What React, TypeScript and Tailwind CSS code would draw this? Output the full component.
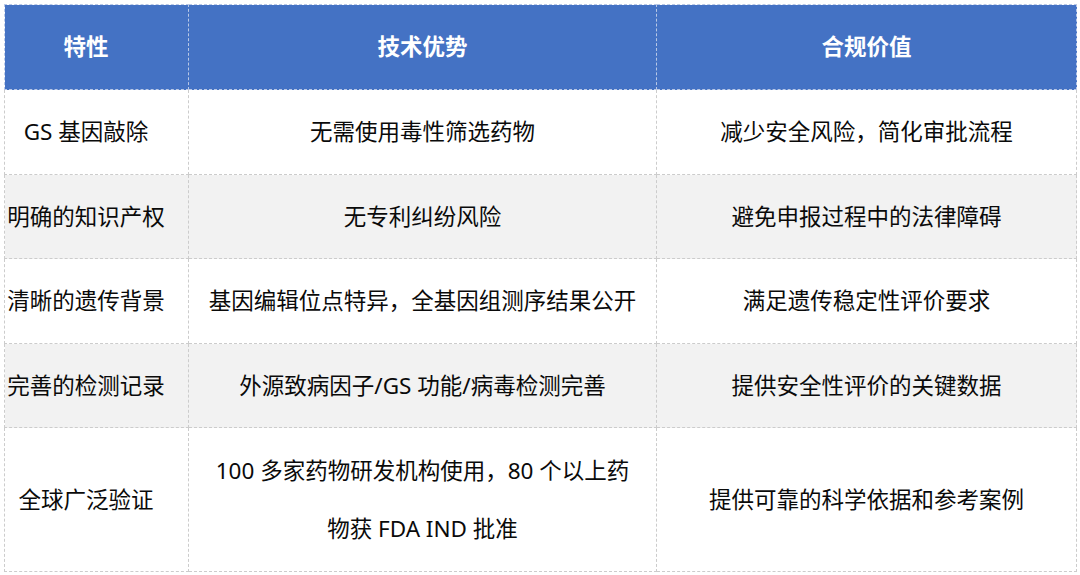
import React from "react";

const rows: { a: string; b: React.ReactNode; c: string; h: string; stripe: boolean }[] = [
  { a: "GS 基因敲除", b: "无需使用毒性筛选药物", c: "减少安全风险，简化审批流程", h: "h-[85px]", stripe: false },
  { a: "明确的知识产权", b: "无专利纠纷风险", c: "避免申报过程中的法律障碍", h: "h-[84px]", stripe: true },
  { a: "清晰的遗传背景", b: "基因编辑位点特异，全基因组测序结果公开", c: "满足遗传稳定性评价要求", h: "h-[85px]", stripe: false },
  { a: "完善的检测记录", b: "外源致病因子/GS 功能/病毒检测完善", c: "提供安全性评价的关键数据", h: "h-[84px]", stripe: true },
  {
    a: "全球广泛验证",
    b: (
      <>
        100 多家药物研发机构使用，80 个以上药
        <br />
        物获 FDA IND 批准
      </>
    ),
    c: "提供可靠的科学依据和参考案例",
    h: "h-[144px]",
    stripe: false,
  },
];

export default function App() {
  return (
    <div
      className="w-[1080px] h-[575px] bg-white pt-[4px] pl-[4px] text-[22.5px] text-[#0a0a0a]"
      style={{ fontFamily: '"Noto Sans", "Noto Sans CJK SC", sans-serif' }}
    >
      <table className="table-fixed border-collapse w-[1072px]">
        <colgroup>
          <col className="w-[184px]" />
          <col className="w-[468px]" />
          <col className="w-[420px]" />
        </colgroup>
        <thead>
          <tr className="h-[85px] bg-[#4472c4] text-white font-bold">
            <th className="border border-dashed border-[#b9c8e6] pr-[21px] text-center font-bold">特性</th>
            <th className="border border-dashed border-[#b9c8e6] text-center font-bold">技术优势</th>
            <th className="border border-dashed border-[#b9c8e6] text-center font-bold">合规价值</th>
          </tr>
        </thead>
        <tbody>
          {rows.map((r, i) => (
            <tr key={i} className={`${r.h} ${r.stripe ? "bg-[#f2f2f2]" : "bg-white"}`}>
              <td className="border border-dashed border-[#cccccc] pr-[21px] text-center leading-[58px] whitespace-nowrap">{r.a}</td>
              <td className="border border-dashed border-[#cccccc] text-center leading-[58px] whitespace-nowrap">{r.b}</td>
              <td className="border border-dashed border-[#cccccc] text-center leading-[58px] whitespace-nowrap">{r.c}</td>
            </tr>
          ))}
        </tbody>
      </table>
    </div>
  );
}
